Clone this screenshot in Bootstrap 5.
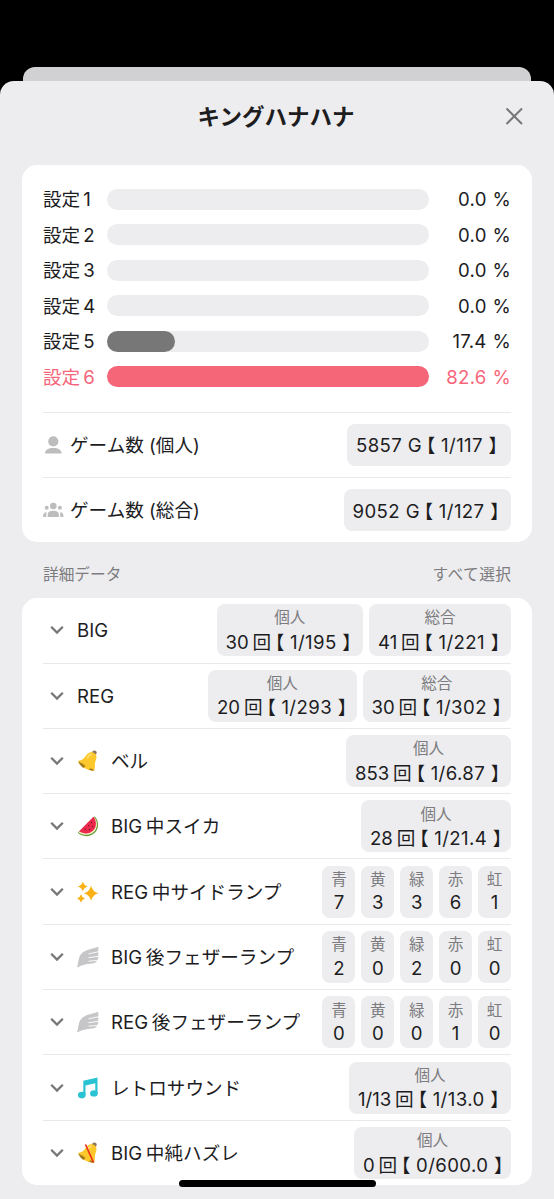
<!DOCTYPE html>
<html lang="ja">
<head>
<meta charset="utf-8">
<meta name="viewport" content="width=device-width, initial-scale=1">
<title>キングハナハナ</title>
<link href="https://cdn.jsdelivr.net/npm/bootstrap@5.3.0/dist/css/bootstrap.min.css" rel="stylesheet">
<style>
  body { background:#000; height:1199px; overflow:hidden; color:#1d1d1f; font-family:Inter,"Noto Sans CJK JP",sans-serif; font-size:18.6px; line-height:24px; padding-top:67px; }
  .backsheet { height:14px; margin:0 23px; background:#d1d1d3; border-radius:12px 12px 0 0; }
  .sheet { background:#ededef; height:1118px; border-radius:14px 14px 0 0; padding:0 22px; }
  .sheet-head { height:83.5px; padding-bottom:12px; }
  .sheet-title { font-size:22.5px; font-weight:600; margin-left:-2px!important; }
  .sheet-close { right:-1px; top:25px; }
  .panel { background:#fff; border-radius:15px; padding:0 21px; display:flow-root; }
  .setting { height:35.5px; }
  .setting-label { width:64px; }
  .setting .u { margin-left:3px; }
  .track { width:322px; height:21.4px; border-radius:11px; background:#ededef; }
  .fill { height:100%; border-radius:11px; background:#777; }
  .hot { color:#f5667a; } .hot .fill { background:#f46678; }
  .percent { letter-spacing:.25px; word-spacing:.4px; }
  .line { border-top:1.5px solid #e9e9eb; }
  .game { height:65.3px; }
  .chip { background:#ededef; border-radius:8px; padding:0 9px; white-space:nowrap; }
  .game .chip { height:42.5px; letter-spacing:.4px; }
  .item { height:65.32px; }
  .item .chip { height:52px; padding-top:3.5px; }
  .who { font-size:15.6px; line-height:21.3px; color:#7c7c80; }
  .value { line-height:24px; }
  .cnt { width:33px; padding:0; }
  .u { margin-left:3.8px; }
  .k { font-feature-settings:"halt"; font-family:"Noto Sans CJK JP",sans-serif; letter-spacing:0; }
  .k:first-of-type, .u + .k { margin-left:4px; }
  .odds { letter-spacing:.4px; }
  .caption-row { height:56px; font-size:15.7px; color:#7c7c80; padding:10px 21px 0; }
  .select-all { letter-spacing:.45px; margin-right:-.5px; }
  .chev { margin-left:7px; width:14px; height:10px; }
  .ico { width:22px; height:22px; margin-left:13px; }
  .name { margin-left:13px; white-space:nowrap; }
  .ico + .name { margin-left:12px; }
  .home { width:197px; height:7px; background:#000; border-radius:4px; left:179px; top:1180px; }
</style>
</head>
<body>
<svg width="0" height="0" class="position-absolute" aria-hidden="true">
  <defs>
    <symbol id="chev" viewBox="0 0 14 10"><path d="M1.2 1.7 7 7.5l5.8-5.8" fill="none" stroke="#77777a" stroke-width="2.3"/></symbol>
    <symbol id="bell" viewBox="0 0 22 22">
      <circle cx="17.4" cy="2.8" r="2.3" fill="#8c7558"/>
      <path d="M3 10.5C8 9.3 8 4.7 12.3 2.7c3-1.4 6.8.3 7.2 3.8.3 3-1.700 5-1.600 8 .1 2-.1 4-.7 6.200C9.500 20.400 3.500 16.600 1.300 11.700c-.4-1 .8-1 1.700-1.200z" fill="#fdc82b"/>
      <path d="M1.400 11.700c2.500.6 5.200 2.400 7.100 4.200l-2.100 2C4 16.300 2.300 14.200 1.400 11.700z" fill="#a87d1e"/>
      <path d="M12.900 18.600c1.600-.5 3.400.4 4.100 2.200-1.900-.1-3.500-.5-4.900-1z" fill="#a8781a"/>
      <path d="M10.500 8c.8-2 2-3.300 3.800-3.500" fill="none" stroke="#ffe178" stroke-width="1.300" stroke-linecap="round"/>
    </symbol>
    <symbol id="melon" viewBox="0 0 22 22">
      <path d="M17.700 1.200C22 6 22.300 13 17.800 17.700 13 22.300 5.500 22.200.8 17.800z" fill="#669b32"/>
      <path d="M17.200 1.900C20.700 6.200 21 12.500 17 16.700 12.700 20.800 6.100 20.700 1.600 17.400z" fill="#f5efc8"/>
      <path d="M16.400 1.700c3.300 4 3.500 10-.2 13.900C12.300 19.300 6.500 19.300 2.200 16.300z" fill="#ef294e"/>
      <g fill="#5a1f2a"><circle cx="14.500" cy="7.500" r=".7"/><circle cx="15.700" cy="11.500" r=".7"/><circle cx="11.800" cy="10.600" r=".7"/><circle cx="12.500" cy="14.500" r=".7"/><circle cx="8.300" cy="14.200" r=".7"/></g>
    </symbol>
    <symbol id="spark" viewBox="0 0 22 22"><g fill="#f9b116">
      <path d="M14.100 4.800q1.500 6 7.300 7.500-5.800 1.500-7.300 7.500-1.500-6-7.300-7.500 5.800-1.500 7.300-7.500z"/>
      <path d="M5.800.6q1 4 5 5-4 1-5 5-1-4-5-5 4-1 5-5z"/>
      <path d="M4 13.200q.9 3.400 4 4.200-3.100.8-4 4.200-.9-3.400-4-4.200 3.100-.8 4-4.200z"/></g></symbol>
    <symbol id="wing" viewBox="0 0 22 22">
      <path d="M.6 20.800C2 17.500 1.700 11.500 4.300 8.300 7.800 4.300 13.500 3.900 20.900 1.400L20.700 11.500c-.4 3-1.700 4.800-3.700 5.200-6.200.9-11.100 1-16.400 4.100z" fill="#c6c6c8" stroke="#c6c6c8" stroke-width="1" stroke-linejoin="round"/>
      <path d="M11.500 7.900 22 5.600M11.500 11.700l10.500-1.500M11.500 15.200l10.500-1" stroke="#fff" stroke-width=".9"/></symbol>
    <symbol id="note" viewBox="0 0 22 22"><g fill="#29c3d4"><path d="M6.300 3.700 20.500.4V17h-2.200V6.300L8.500 8.600v9.700H6.300z"/><ellipse cx="4.800" cy="18.100" rx="3.800" ry="3.300"/><ellipse cx="16.900" cy="16.400" rx="3.800" ry="3.200"/></g></symbol>
  </defs>
</svg>

<div class="backsheet"></div>
<main class="sheet">
  <header class="sheet-head d-flex align-items-center justify-content-center position-relative">
    <h1 class="sheet-title m-0">キングハナハナ</h1>
    <button class="sheet-close btn p-0 border-0 position-absolute lh-1" aria-label="閉じる"><svg width="38" height="20" viewBox="0 0 38 20"><path d="m11.500 2.500 15.500 15.500m0-15.500L11.500 18" stroke="#77777a" stroke-width="2"/></svg></button>
  </header>

  <section class="panel" style="height:377.500px;padding-top:17px">
    <div class="setting d-flex align-items-center"><span class="setting-label">設定<span class="u">1</span></span><div class="track"></div><span class="percent ms-auto">0.0 %</span></div>
    <div class="setting d-flex align-items-center"><span class="setting-label">設定<span class="u">2</span></span><div class="track"></div><span class="percent ms-auto">0.0 %</span></div>
    <div class="setting d-flex align-items-center"><span class="setting-label">設定<span class="u">3</span></span><div class="track"></div><span class="percent ms-auto">0.0 %</span></div>
    <div class="setting d-flex align-items-center"><span class="setting-label">設定<span class="u">4</span></span><div class="track"></div><span class="percent ms-auto">0.0 %</span></div>
    <div class="setting d-flex align-items-center"><span class="setting-label">設定<span class="u">5</span></span><div class="track"><div class="fill" style="width:21.100%"></div></div><span class="percent ms-auto">17.4 %</span></div>
    <div class="setting hot d-flex align-items-center"><span class="setting-label">設定<span class="u">6</span></span><div class="track"><div class="fill" style="width:100%"></div></div><span class="percent ms-auto">82.6 %</span></div>
    <div class="line game d-flex align-items-center" style="margin-top:17.200px">
      <svg width="21" height="20" viewBox="0 0 21 20" fill="#bdbdbd"><circle cx="10.300" cy="6.400" r="5.100"/><path d="M2 18.500c0-3.600 3.400-5.500 8.300-5.500s8.300 1.900 8.300 5.500z"/></svg>
      <span style="margin-left:6px">ゲーム数 (個人)</span>
      <div class="chip ms-auto d-flex align-items-center" style="width:164px"><div>5857 G<span class="k">【</span><span class="odds"> 1/117 </span><span class="k">】</span></div></div>
    </div>
    <div class="line game d-flex align-items-center">
      <svg width="21" height="20" viewBox="0 0 21 20" fill="#bdbdbd"><circle cx="10.300" cy="6" r="3.300"/><circle cx="3.700" cy="7.800" r="2"/><circle cx="16.900" cy="7.800" r="2"/><path d="M4.700 17v-2.300C4.700 12 7 10.700 10.300 10.700s5.600 1.300 5.600 4V17zM3.300 12v5H.200v-1.500c0-2 1.200-3.100 3.100-3.500zm14 0v5h3.100v-1.500c0-2-1.200-3.100-3.100-3.500z"/></svg>
      <span style="margin-left:6px">ゲーム数 (総合)</span>
      <div class="chip ms-auto d-flex align-items-center" style="width:167.500px"><div>9052 G<span class="k">【</span><span class="odds"> 1/127 </span><span class="k">】</span></div></div>
    </div>
  </section>

  <div class="caption-row d-flex align-items-center justify-content-between pb-0"><span>詳細データ</span><span class="select-all">すべて選択</span></div>

  <section class="panel" style="height:587px">
    <div class="item d-flex align-items-center" style="margin-top:-.8px"><svg class="chev"><use href="#chev"/></svg><span class="name">BIG</span>
      <div class="d-flex ms-auto" style="gap:6px"><div class="chip" style="width:146.500px"><div class="who text-center">個人</div><div class="value">30<span class="u">回</span><span class="k">【</span><span class="odds"> 1/195 </span><span class="k">】</span></div></div><div class="chip" style="width:142px"><div class="who text-center">総合</div><div class="value">41<span class="u">回</span><span class="k">【</span><span class="odds"> 1/221 </span><span class="k">】</span></div></div></div></div>
    <div class="line item d-flex align-items-center"><svg class="chev"><use href="#chev"/></svg><span class="name">REG</span>
      <div class="d-flex ms-auto" style="gap:6px"><div class="chip" style="width:148.500px"><div class="who text-center">個人</div><div class="value">20<span class="u">回</span><span class="k">【</span><span class="odds"> 1/293 </span><span class="k">】</span></div></div><div class="chip" style="width:148.500px"><div class="who text-center">総合</div><div class="value">30<span class="u">回</span><span class="k">【</span><span class="odds"> 1/302 </span><span class="k">】</span></div></div></div></div>
    <div class="line item d-flex align-items-center"><svg class="chev"><use href="#chev"/></svg><svg class="ico"><use href="#bell"/></svg><span class="name">ベル</span>
      <div class="chip ms-auto" style="width:165px"><div class="who text-center">個人</div><div class="value">853<span class="u">回</span><span class="k">【</span><span class="odds"> 1/6.87 </span><span class="k">】</span></div></div></div>
    <div class="line item d-flex align-items-center"><svg class="chev"><use href="#chev"/></svg><svg class="ico"><use href="#melon"/></svg><span class="name">BIG<span class="u">中スイカ</span></span>
      <div class="chip ms-auto" style="width:150px"><div class="who text-center">個人</div><div class="value">28<span class="u">回</span><span class="k">【</span><span class="odds"> 1/21.4 </span><span class="k">】</span></div></div></div>
    <div class="line item d-flex align-items-center"><svg class="chev"><use href="#chev"/></svg><svg class="ico"><use href="#spark"/></svg><span class="name">REG<span class="u">中サイドランプ</span></span>
      <div class="d-flex ms-auto text-center" style="gap:5.900px"><div class="chip cnt"><div class="who">青</div><div>7</div></div><div class="chip cnt"><div class="who">黄</div><div>3</div></div><div class="chip cnt"><div class="who">緑</div><div>3</div></div><div class="chip cnt"><div class="who">赤</div><div>6</div></div><div class="chip cnt"><div class="who">虹</div><div>1</div></div></div></div>
    <div class="line item d-flex align-items-center"><svg class="chev"><use href="#chev"/></svg><svg class="ico"><use href="#wing"/></svg><span class="name">BIG<span class="u">後フェザーランプ</span></span>
      <div class="d-flex ms-auto text-center" style="gap:5.900px"><div class="chip cnt"><div class="who">青</div><div>2</div></div><div class="chip cnt"><div class="who">黄</div><div>0</div></div><div class="chip cnt"><div class="who">緑</div><div>2</div></div><div class="chip cnt"><div class="who">赤</div><div>0</div></div><div class="chip cnt"><div class="who">虹</div><div>0</div></div></div></div>
    <div class="line item d-flex align-items-center"><svg class="chev"><use href="#chev"/></svg><svg class="ico"><use href="#wing"/></svg><span class="name">REG<span class="u">後フェザーランプ</span></span>
      <div class="d-flex ms-auto text-center" style="gap:5.900px"><div class="chip cnt"><div class="who">青</div><div>0</div></div><div class="chip cnt"><div class="who">黄</div><div>0</div></div><div class="chip cnt"><div class="who">緑</div><div>0</div></div><div class="chip cnt"><div class="who">赤</div><div>1</div></div><div class="chip cnt"><div class="who">虹</div><div>0</div></div></div></div>
    <div class="line item d-flex align-items-center"><svg class="chev"><use href="#chev"/></svg><svg class="ico"><use href="#note"/></svg><span class="name">レトロサウンド</span>
      <div class="chip ms-auto" style="width:162px"><div class="who text-center">個人</div><div class="value">1/13<span class="u">回</span><span class="k">【</span><span class="odds"> 1/13.0 </span><span class="k">】</span></div></div></div>
    <div class="line item d-flex align-items-center"><svg class="chev"><use href="#chev"/></svg><svg class="ico" viewBox="0 0 22 22"><use href="#bell"/><path d="M8.500 2.500 16.500 20.500" stroke="#e8301e" stroke-width="1.700"/></svg><span class="name">BIG<span class="u">中純ハズレ</span></span>
      <div class="chip ms-auto" style="width:157px"><div class="who text-center">個人</div><div class="value">0<span class="u">回</span><span class="k">【</span><span class="odds"> 0/600.0 </span><span class="k">】</span></div></div></div>
  </section>
</main>
<div class="home position-absolute"></div>
<script src="https://cdn.jsdelivr.net/npm/bootstrap@5.3.0/dist/js/bootstrap.bundle.min.js"></script>
</body>
</html>
